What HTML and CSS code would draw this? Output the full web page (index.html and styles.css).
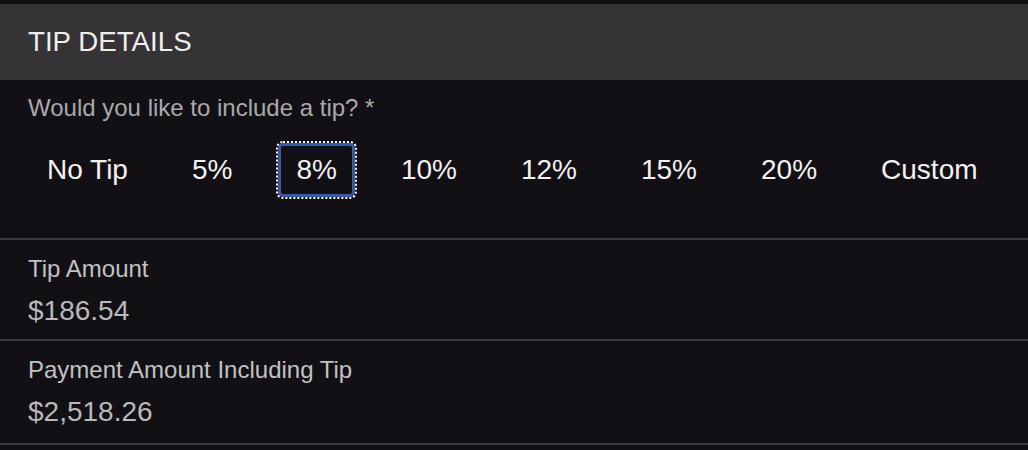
FILE: index.html
```html
<!DOCTYPE html>
<html lang="en">
<head>
<meta charset="utf-8">
<title>Tip Details</title>
<link rel="stylesheet" href="styles.css">
</head>
<body>
<div class="panel">
  <div class="header">TIP DETAILS</div>
  <div class="question-section">
    <div class="question">Would you like to include a tip? *</div>
    <div class="tip-options">
      <button class="tip-btn">No Tip</button>
      <button class="tip-btn">5%</button>
      <button class="tip-btn selected">8%</button>
      <button class="tip-btn">10%</button>
      <button class="tip-btn">12%</button>
      <button class="tip-btn">15%</button>
      <button class="tip-btn">20%</button>
      <button class="tip-btn">Custom</button>
    </div>
  </div>
  <div class="field">
    <div class="field-label">Tip Amount</div>
    <div class="field-value">$186.54</div>
  </div>
  <div class="field last">
    <div class="field-label">Payment Amount Including Tip</div>
    <div class="field-value">$2,518.26</div>
  </div>
</div>
</body>
</html>
```
FILE: styles.css
```css
html, body {
  margin: 0;
  padding: 0;
  background: #121014;
  font-family: "Liberation Sans", Arial, Helvetica, sans-serif;
}

.panel {
  padding-top: 4px;
}

.header {
  height: 76px;
  background: #353336;
  color: #eeeeee;
  font-size: 27.7px;
  display: flex;
  align-items: center;
  padding-left: 28px;
}

.question-section {
  padding: 14px 28px 41px;
  border-bottom: 2px solid #3c3a3d;
}

.question {
  font-size: 24px;
  line-height: 28px;
  color: #aaa9ac;
}

.tip-options {
  display: flex;
  gap: 28px;
  margin-top: 21px;
  margin-left: 1px;
}

.tip-btn {
  background: transparent;
  border: 3px solid transparent;
  border-radius: 5px;
  padding: 8px 15px;
  font-family: inherit;
  font-size: 28px;
  line-height: 32px;
  color: #f2f2f2;
}

.tip-btn.selected {
  border-color: #3b5aa3;
  outline: 2px dotted #ffffff;
  outline-offset: 0;
}

.field {
  padding: 15px 28px 12px;
  border-bottom: 2px solid #3c3a3d;
}

.field.last {
  padding-bottom: 15px;
}

.field-label {
  font-size: 24px;
  line-height: 27px;
  color: #c2c1c4;
}

.field-value {
  margin-top: 13px;
  font-size: 28px;
  line-height: 32px;
  color: #b9b8bb;
}
```
